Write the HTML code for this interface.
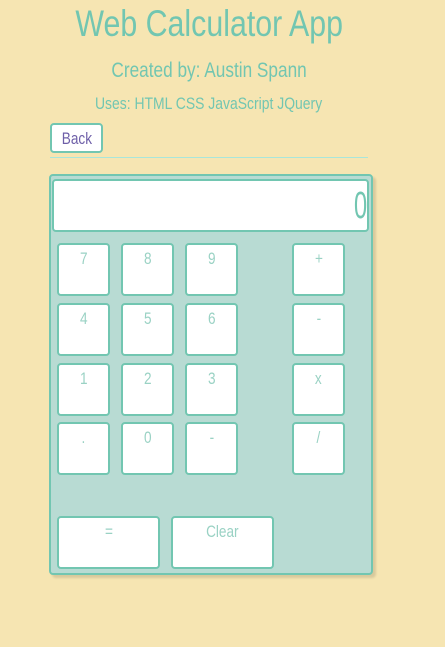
<!DOCTYPE html>
<html><head><style>
body{margin:0;width:445px;height:647px;background:#f6e5b2;font-family:"Liberation Sans",sans-serif;color:#72c6b1;position:relative;overflow:hidden}
.t{position:absolute;left:0;width:418px;text-align:center;white-space:nowrap}
.t span{display:inline-block;transform:scaleX(0.82);transform-origin:center}
.back{position:absolute;left:50px;top:123px;width:49px;height:26px;border:2px solid #72c6b1;border-radius:4px;background:#fff;color:#6e5fa8;font-size:17px;text-align:center;line-height:27px}
.back span{display:inline-block;transform:scaleX(0.8)}
.hr{position:absolute;left:50px;top:157px;width:318px;height:1px;background:#a9e6da}
.calc{position:absolute;left:49px;top:174px;width:320px;height:397px;border:2px solid #72c6b1;border-radius:4px;background:#b8dbd3;box-shadow:3px 3px 2px rgba(0,0,0,.12)}
.disp{position:absolute;left:52px;top:179px;width:313px;height:49px;border:2px solid #72c6b1;border-radius:4px;background:#fff;text-align:right;font-size:38px;line-height:50px;color:#72c6b1}
.disp span{display:inline-block;transform:scaleX(0.62);transform-origin:right}
.b{position:absolute;width:49px;height:49px;border:2px solid #72c6b1;border-radius:4px;background:#fff;color:#9ad2c4;font-size:17px;text-align:center;line-height:28px}
.b span{display:inline-block;transform:scaleX(0.8)}
</style></head><body>
<div class="t" style="top:2px;font-size:37px;line-height:44px"><span>Web Calculator App</span></div>
<div class="t" style="top:58px;font-size:21px;line-height:26px"><span>Created by: Austin Spann</span></div>
<div class="t" style="top:93px;font-size:17px;line-height:22px"><span>Uses: HTML CSS JavaScript JQuery</span></div>
<div class="back"><span>Back</span></div>
<div class="hr"></div>
<div class="calc"></div>
<div class="disp"><span>0</span></div>
<div class="b" style="left:57px;top:243px"><span>7</span></div>
<div class="b" style="left:121px;top:243px"><span>8</span></div>
<div class="b" style="left:185px;top:243px"><span>9</span></div>
<div class="b" style="left:292px;top:243px"><span>+</span></div>
<div class="b" style="left:57px;top:303px"><span>4</span></div>
<div class="b" style="left:121px;top:303px"><span>5</span></div>
<div class="b" style="left:185px;top:303px"><span>6</span></div>
<div class="b" style="left:292px;top:303px"><span>-</span></div>
<div class="b" style="left:57px;top:363px"><span>1</span></div>
<div class="b" style="left:121px;top:363px"><span>2</span></div>
<div class="b" style="left:185px;top:363px"><span>3</span></div>
<div class="b" style="left:292px;top:363px"><span>x</span></div>
<div class="b" style="left:57px;top:422px"><span>.</span></div>
<div class="b" style="left:121px;top:422px"><span>0</span></div>
<div class="b" style="left:185px;top:422px"><span>-</span></div>
<div class="b" style="left:292px;top:422px"><span>/</span></div>
<div class="b" style="left:57px;top:516px;width:99px"><span>=</span></div>
<div class="b" style="left:171px;top:516px;width:99px"><span>Clear</span></div>
</body></html>
